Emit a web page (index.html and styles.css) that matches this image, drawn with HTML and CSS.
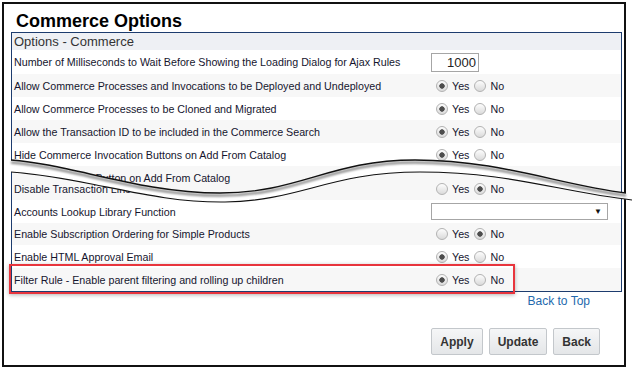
FILE: index.html
```html
<!DOCTYPE html>
<html lang="en">
<head>
    <meta charset="UTF-8">
    <title>Commerce Options</title>
    <link rel="stylesheet" href="styles.css">
</head>
<body>
    <div class="frame">
        <h1 class="title">Commerce Options</h1>

        <div class="panel panel-top">
            <div class="panel-head">Options - Commerce</div>
            <div class="row tall">
                <span class="label">Number of Milliseconds to Wait Before Showing the Loading Dialog for Ajax Rules</span>
                <span class="control"><input class="num" type="text" value="1000"></span>
            </div>
            <div class="row alt">
                <span class="label">Allow Commerce Processes and Invocations to be Deployed and Undeployed</span>
                <span class="control"><input type="radio" name="r1" checked><label>Yes</label><input type="radio" name="r1"><label>No</label></span>
            </div>
            <div class="row">
                <span class="label">Allow Commerce Processes to be Cloned and Migrated</span>
                <span class="control"><input type="radio" name="r2" checked><label>Yes</label><input type="radio" name="r2"><label>No</label></span>
            </div>
            <div class="row alt">
                <span class="label">Allow the Transaction ID to be included in the Commerce Search</span>
                <span class="control"><input type="radio" name="r3" checked><label>Yes</label><input type="radio" name="r3"><label>No</label></span>
            </div>
            <div class="row">
                <span class="label">Hide Commerce Invocation Buttons on Add From Catalog</span>
                <span class="control"><input type="radio" name="r4" checked><label>Yes</label><input type="radio" name="r4"><label>No</label></span>
            </div>
            <div class="row alt">
                <span class="label">Hide Add to Cart Button on Add From Catalog</span>
                <span class="control"><input type="radio" name="r5"><label>Yes</label><input type="radio" name="r5" checked><label>No</label></span>
            </div>
        </div>

        <div class="panel panel-bottom">
            <div class="row alt short">
                <span class="label">Disable Transaction Line Grouping</span>
                <span class="control"><input type="radio" name="r6"><label>Yes</label><input type="radio" name="r6" checked><label>No</label></span>
            </div>
            <div class="row">
                <span class="label">Accounts Lookup Library Function</span>
                <span class="control"><span class="select">&#9660;</span></span>
            </div>
            <div class="row alt short">
                <span class="label">Enable Subscription Ordering for Simple Products</span>
                <span class="control"><input type="radio" name="r7"><label>Yes</label><input type="radio" name="r7" checked><label>No</label></span>
            </div>
            <div class="row">
                <span class="label">Enable HTML Approval Email</span>
                <span class="control"><input type="radio" name="r8" checked><label>Yes</label><input type="radio" name="r8"><label>No</label></span>
            </div>
            <div class="row alt">
                <span class="label">Filter Rule - Enable parent filtering and rolling up children</span>
                <span class="control"><input type="radio" name="r9" checked><label>Yes</label><input type="radio" name="r9"><label>No</label></span>
            </div>
        </div>

        <div class="links"><a href="#">Back to Top</a></div>

        <div class="actions">
            <button class="btn">Apply</button>
            <button class="btn">Update</button>
            <button class="btn">Back</button>
        </div>
    </div>

    <!-- highlight round the filter rule row -->
    <div class="highlight"></div>

    <!-- torn edge between the two parts of the list -->
    <svg class="tear" width="632" height="369" viewBox="0 0 632 369">
        <defs>
            <filter id="soft" x="-5%" y="-50%" width="110%" height="200%">
                <feGaussianBlur stdDeviation="1.2"/>
            </filter>
        </defs>
        <path class="gap" d="M11 160 C70 164 140 193 220 193 C300 193 330 160 415 160 C500 160 560 185 626 193 L632 200 C560 192 510 172 420 172 C330 172 300 201 225 202 C150 203 90 178 11 172 Z"/>
        <path class="shade" transform="translate(0 2.5)" filter="url(#soft)" d="M11 160 C70 164 140 193 220 193 C300 193 330 160 415 160 C500 160 560 185 626 193"/>
        <path class="edge" d="M11 160 C70 164 140 193 220 193 C300 193 330 160 415 160 C500 160 560 185 626 193"/>
        <path class="edge thin" d="M11 172 C90 178 150 203 225 202 C300 201 330 172 420 172 C510 172 560 192 632 200"/>
    </svg>
</body>
</html>
```

FILE: styles.css
```css
* {
    box-sizing: border-box;
}
body {
    margin: 0;
    position: relative;
    width: 632px;
    height: 369px;
    overflow: hidden;
    background: #fff;
    font-family: "Liberation Sans", Arial, sans-serif;
}
.frame {
    margin: 2px 0 0 2px;
    width: 624px;
    height: 365px;
    border: 2px solid #111;
}
.title {
    margin: 6px 0 0 12px;
    font-size: 18px;
    line-height: 22px;
    font-weight: bold;
    color: #000;
}
.panel {
    margin-left: 7px;
    width: 611px;
    border: 1px solid #1d3c6e;
}
.panel-top {
    border-bottom: none;
    padding-bottom: 6px;
    background: #f7f7f7;
}
.panel-head {
    height: 17px;
    line-height: 17px;
    padding-left: 2px;
    font-size: 13px;
    color: #333;
    background: #eef0f4;
}
.row {
    display: flex;
    align-items: center;
    height: 23px;
    background: #fff;
    font-size: 10.7px;
    color: #15152e;
}
.row.alt {
    background: #f7f7f7;
}
.row.tall {
    height: 24px;
}
.row.short {
    height: 22px;
}
.label {
    width: 419px;
    padding-left: 2px;
    white-space: nowrap;
    overflow: hidden;
}
.control {
    display: flex;
    align-items: center;
}
.control input[type=radio] {
    appearance: none;
    -webkit-appearance: none;
    width: 12px;
    height: 12px;
    margin: 0 4px 0 5px;
    border: 1px solid #b2b2b2;
    border-radius: 50%;
    background: linear-gradient(#fdfdfd, #dadada);
}
.control input[type=radio]:checked {
    background: radial-gradient(circle, #4d4d4d 0 2.4px, transparent 3px), linear-gradient(#fdfdfd, #dadada);
}
.num {
    width: 48px;
    height: 19px;
    margin: 0;
    padding: 0 2px;
    border: 1px solid #a6a6a6;
    font-family: "Liberation Sans", Arial, sans-serif;
    font-size: 13px;
    color: #222;
    text-align: right;
}
.select {
    display: flex;
    align-items: center;
    justify-content: flex-end;
    width: 177px;
    height: 17px;
    padding-right: 5px;
    border: 1px solid #a6a6a6;
    background: #fff;
    font-size: 8px;
    color: #111;
}
.panel-bottom {
    margin-top: -25px;
    border-top: none;
    padding-top: 8px;
    background: #f7f7f7;
    clip-path: path('M0 2 C79 8 139 33 214 32 C289 31 319 2 409 2 C499 2 549 22 621 30 L621 140 L0 140 Z');
}
.links {
    margin-top: 2px;
    padding-right: 34px;
    text-align: right;
    font-size: 12px;
    line-height: 14px;
}
.links a {
    color: #2369ad;
    text-decoration: none;
}
.actions {
    display: flex;
    justify-content: flex-end;
    gap: 6px;
    margin-top: 20px;
    padding-right: 24px;
}
.btn {
    height: 27px;
    padding: 0 8px;
    border: 1px solid #c3c7cb;
    border-radius: 2px;
    background: linear-gradient(#f5f6f7, #e4e6e8);
    font-family: "Liberation Sans", Arial, sans-serif;
    font-size: 12px;
    font-weight: bold;
    color: #333;
}
.highlight {
    position: absolute;
    left: 9px;
    top: 264px;
    width: 506px;
    height: 30px;
    border: 2px solid #e8353d;
    box-shadow: 0 1px 4px rgba(0,0,0,0.3);
}
.tear {
    position: absolute;
    left: 0;
    top: 0;
    pointer-events: none;
}
.gap {
    fill: #fff;
}
.shade {
    fill: none;
    stroke: rgba(0,0,0,0.45);
    stroke-width: 2.5;
}
.edge {
    fill: none;
    stroke: #111;
    stroke-width: 1.4;
}
.edge.thin {
    stroke-width: 1.1;
}
```
